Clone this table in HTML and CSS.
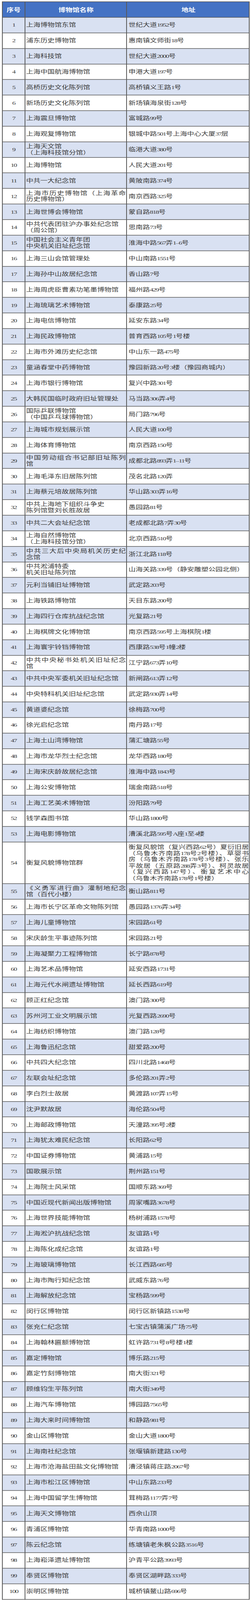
FILE: index.html
```html
<!DOCTYPE html>
<html lang="zh-CN">
<head>
<meta charset="utf-8">
<title>上海博物馆名录</title>
<link rel="stylesheet" href="styles.css">
</head>
<body>
<div class="sheet">
<div class="row head"><div class="cell no">序号</div><div class="cell name">博物馆名称</div><div class="cell addr">地址</div></div>
<div class="row"><div class="cell no">1</div><div class="cell name"><p>上海博物馆东馆</p></div><div class="cell addr"><p>世纪大道<span class="n">1952</span>号</p></div></div>
<div class="row"><div class="cell no">2</div><div class="cell name"><p>浦东历史博物馆</p></div><div class="cell addr"><p>惠南镇文师街<span class="n">18</span>号</p></div></div>
<div class="row"><div class="cell no">3</div><div class="cell name"><p>上海科技馆</p></div><div class="cell addr"><p>世纪大道<span class="n">2000</span>号</p></div></div>
<div class="row"><div class="cell no">4</div><div class="cell name"><p>上海中国航海博物馆</p></div><div class="cell addr"><p>申港大道<span class="n">197</span>号</p></div></div>
<div class="row"><div class="cell no">5</div><div class="cell name"><p>高桥历史文化陈列馆</p></div><div class="cell addr"><p>高桥镇义王路<span class="n">1</span>号</p></div></div>
<div class="row"><div class="cell no">6</div><div class="cell name"><p>新场历史文化陈列馆</p></div><div class="cell addr"><p>新场镇海泉街<span class="n">128</span>号</p></div></div>
<div class="row"><div class="cell no">7</div><div class="cell name"><p>上海震旦博物馆</p></div><div class="cell addr"><p>富城路<span class="n">99</span>号</p></div></div>
<div class="row"><div class="cell no">8</div><div class="cell name"><p>上海观复博物馆</p></div><div class="cell addr"><p>银城中路<span class="n">501</span>号上海中心大厦<span class="n">37</span>层</p></div></div>
<div class="row"><div class="cell no">9</div><div class="cell name"><p>上海天文馆<br>（上海科技馆分馆）</p></div><div class="cell addr"><p>临港大道<span class="n">380</span>号</p></div></div>
<div class="row"><div class="cell no">10</div><div class="cell name"><p>上海博物馆</p></div><div class="cell addr"><p>人民大道<span class="n">201</span>号</p></div></div>
<div class="row"><div class="cell no">11</div><div class="cell name"><p>中共一大纪念馆</p></div><div class="cell addr"><p>黄陂南路<span class="n">374</span>号</p></div></div>
<div class="row"><div class="cell no">12</div><div class="cell name"><p class="jl">上海市历史博物馆（上海革命</p><p>历史博物馆）</p></div><div class="cell addr"><p>南京西路<span class="n">325</span>号</p></div></div>
<div class="row"><div class="cell no">13</div><div class="cell name"><p>上海世博会博物馆</p></div><div class="cell addr"><p>蒙自路<span class="n">818</span>号</p></div></div>
<div class="row"><div class="cell no">14</div><div class="cell name"><p>中共代表团驻沪办事处纪念馆<br>（周公馆）</p></div><div class="cell addr"><p>思南路<span class="n">73</span>号</p></div></div>
<div class="row"><div class="cell no">15</div><div class="cell name"><p>中国社会主义青年团<br>中央机关旧址纪念馆</p></div><div class="cell addr"><p>淮海中路<span class="n">567</span>弄<span class="n">1–6</span>号</p></div></div>
<div class="row"><div class="cell no">16</div><div class="cell name"><p>上海三山会馆管理处</p></div><div class="cell addr"><p>中山南路<span class="n">1551</span>号</p></div></div>
<div class="row"><div class="cell no">17</div><div class="cell name"><p>上海孙中山故居纪念馆</p></div><div class="cell addr"><p>香山路<span class="n">7</span>号</p></div></div>
<div class="row"><div class="cell no">18</div><div class="cell name"><p>上海周虎臣曹素功笔墨博物馆</p></div><div class="cell addr"><p>福州路<span class="n">429</span>号</p></div></div>
<div class="row"><div class="cell no">19</div><div class="cell name"><p>上海琉璃艺术博物馆</p></div><div class="cell addr"><p>泰康路<span class="n">25</span>号</p></div></div>
<div class="row"><div class="cell no">20</div><div class="cell name"><p>上海电信博物馆</p></div><div class="cell addr"><p>延安东路<span class="n">34</span>号</p></div></div>
<div class="row"><div class="cell no">21</div><div class="cell name"><p>上海民政博物馆</p></div><div class="cell addr"><p>普育西路<span class="n">105</span>号<span class="n">1</span>号楼</p></div></div>
<div class="row"><div class="cell no">22</div><div class="cell name"><p>上海市外滩历史纪念馆</p></div><div class="cell addr"><p>中山东一路<span class="n">475</span>号</p></div></div>
<div class="row"><div class="cell no">23</div><div class="cell name"><p>童涵春堂中药博物馆</p></div><div class="cell addr"><p>豫园新路<span class="n">20</span>号<span class="n">3</span>楼（豫园商城内）</p></div></div>
<div class="row"><div class="cell no">24</div><div class="cell name"><p>上海市银行博物馆</p></div><div class="cell addr"><p>复兴中路<span class="n">301</span>号</p></div></div>
<div class="row"><div class="cell no">25</div><div class="cell name"><p>大韩民国临时政府旧址管理处</p></div><div class="cell addr"><p>马当路<span class="n">306</span>弄<span class="n">4</span>号</p></div></div>
<div class="row"><div class="cell no">26</div><div class="cell name"><p>国际乒联博物馆<br>（中国乒乓球博物馆）</p></div><div class="cell addr"><p>局门路<span class="n">796</span>号</p></div></div>
<div class="row"><div class="cell no">27</div><div class="cell name"><p>上海城市规划展示馆</p></div><div class="cell addr"><p>人民大道<span class="n">100</span>号</p></div></div>
<div class="row"><div class="cell no">28</div><div class="cell name"><p>上海体育博物馆</p></div><div class="cell addr"><p>南京西路<span class="n">150</span>号</p></div></div>
<div class="row"><div class="cell no">29</div><div class="cell name"><p class="jl">中国劳动组合书记部旧址陈列</p><p>馆</p></div><div class="cell addr"><p>成都北路<span class="n">893</span>弄<span class="n">1–11</span>号</p></div></div>
<div class="row"><div class="cell no">30</div><div class="cell name"><p>上海毛泽东旧居陈列馆</p></div><div class="cell addr"><p>茂名北路<span class="n">120</span>弄</p></div></div>
<div class="row"><div class="cell no">31</div><div class="cell name"><p>上海蔡元培故居陈列馆</p></div><div class="cell addr"><p>华山路<span class="n">303</span>弄<span class="n">16</span>号</p></div></div>
<div class="row"><div class="cell no">32</div><div class="cell name"><p>中共上海地下组织斗争史<br>陈列馆暨刘长胜故居</p></div><div class="cell addr"><p>愚园路<span class="n">81</span>号</p></div></div>
<div class="row"><div class="cell no">33</div><div class="cell name"><p>中共二大会址纪念馆</p></div><div class="cell addr"><p>老成都北路<span class="n">7</span>弄<span class="n">30</span>号</p></div></div>
<div class="row"><div class="cell no">34</div><div class="cell name"><p>上海自然博物馆<br>（上海科技馆分馆）</p></div><div class="cell addr"><p>北京西路<span class="n">510</span>号</p></div></div>
<div class="row"><div class="cell no">35</div><div class="cell name"><p class="jl">中共三大后中央局机关历史纪</p><p>念馆</p></div><div class="cell addr"><p>浙江北路<span class="n">118</span>号</p></div></div>
<div class="row"><div class="cell no">36</div><div class="cell name"><p>中共淞浦特委<br>机关旧址陈列馆</p></div><div class="cell addr"><p>山海关路<span class="n">339</span>号（静安雕塑公园北侧）</p></div></div>
<div class="row"><div class="cell no">37</div><div class="cell name"><p>元利当铺旧址博物馆</p></div><div class="cell addr"><p>武定路<span class="n">203</span>号</p></div></div>
<div class="row"><div class="cell no">38</div><div class="cell name"><p>上海铁路博物馆</p></div><div class="cell addr"><p>天目东路<span class="n">200</span>号</p></div></div>
<div class="row"><div class="cell no">39</div><div class="cell name"><p>上海四行仓库抗战纪念馆</p></div><div class="cell addr"><p>光复路<span class="n">21</span>号</p></div></div>
<div class="row"><div class="cell no">40</div><div class="cell name"><p>上海棋牌文化博物馆</p></div><div class="cell addr"><p>南京西路<span class="n">595</span>号上海棋院<span class="n">1</span>楼</p></div></div>
<div class="row"><div class="cell no">41</div><div class="cell name"><p>上海寰宇铃铛博物馆</p></div><div class="cell addr"><p>西康路<span class="n">538</span>号<span class="n">1</span>幢<span class="n">2</span>楼</p></div></div>
<div class="row"><div class="cell no">42</div><div class="cell name"><p class="jl">中共中央秘书处机关旧址纪念</p><p>馆</p></div><div class="cell addr"><p>江宁路<span class="n">673</span>弄<span class="n">10</span>号</p></div></div>
<div class="row"><div class="cell no">43</div><div class="cell name"><p>中共中央军委机关旧址纪念馆</p></div><div class="cell addr"><p>新闸路<span class="n">613</span>弄<span class="n">12</span>号</p></div></div>
<div class="row"><div class="cell no">44</div><div class="cell name"><p>中央特科机关旧址纪念馆</p></div><div class="cell addr"><p>武定路<span class="n">930</span>弄<span class="n">14</span>号</p></div></div>
<div class="row"><div class="cell no">45</div><div class="cell name"><p>黄道婆纪念馆</p></div><div class="cell addr"><p>徐梅路<span class="n">700</span>号</p></div></div>
<div class="row"><div class="cell no">46</div><div class="cell name"><p>徐光启纪念馆</p></div><div class="cell addr"><p>南丹路<span class="n">17</span>号</p></div></div>
<div class="row"><div class="cell no">47</div><div class="cell name"><p>上海土山湾博物馆</p></div><div class="cell addr"><p>蒲汇塘路<span class="n">55</span>号</p></div></div>
<div class="row"><div class="cell no">48</div><div class="cell name"><p>上海市龙华烈士纪念馆</p></div><div class="cell addr"><p>龙华西路<span class="n">180</span>号</p></div></div>
<div class="row"><div class="cell no">49</div><div class="cell name"><p>上海宋庆龄故居纪念馆</p></div><div class="cell addr"><p>淮海中路<span class="n">1843</span>号</p></div></div>
<div class="row"><div class="cell no">50</div><div class="cell name"><p>上海公安博物馆</p></div><div class="cell addr"><p>瑞金南路<span class="n">518</span>号</p></div></div>
<div class="row"><div class="cell no">51</div><div class="cell name"><p>上海工艺美术博物馆</p></div><div class="cell addr"><p>汾阳路<span class="n">79</span>号</p></div></div>
<div class="row"><div class="cell no">52</div><div class="cell name"><p>钱学森图书馆</p></div><div class="cell addr"><p>华山路<span class="n">1800</span>号</p></div></div>
<div class="row"><div class="cell no">53</div><div class="cell name"><p>上海电影博物馆</p></div><div class="cell addr"><p>漕溪北路<span class="n">595</span>号<span class="n">A</span>座<span class="n">1</span>至<span class="n">4</span>楼</p></div></div>
<div class="row tall"><div class="cell no">54</div><div class="cell name"><p>衡复风貌博物馆群</p></div><div class="cell addr long"><p class="jl">衡复风貌馆（复兴西路<span class="n">62</span>号）夏衍旧居</p><p class="jl">（乌鲁木齐南路<span class="n">178</span>号<span class="n">2</span>号楼）、草婴书</p><p class="jl">房（乌鲁木齐南路<span class="n">178</span>号<span class="n">3</span>号楼）、张乐</p><p class="jl">平故居（五原路<span class="n">288</span>弄<span class="n">3</span>号）、柯灵故居</p><p class="jl">（复兴西路<span class="n">147</span>号）、衡复艺术中心</p><p>（乌鲁木齐南路<span class="n">178</span>号<span class="n">1</span>号楼）</p></div></div>
<div class="row"><div class="cell no">55</div><div class="cell name"><p class="jl">《义勇军进行曲》灌制地纪念</p><p>馆（百代小楼）</p></div><div class="cell addr"><p>衡山路<span class="n">811</span>号</p></div></div>
<div class="row"><div class="cell no">56</div><div class="cell name"><p>上海市长宁区革命文物陈列馆</p></div><div class="cell addr"><p>愚园路<span class="n">1376</span>弄<span class="n">34</span>号</p></div></div>
<div class="row"><div class="cell no">57</div><div class="cell name"><p>上海儿童博物馆</p></div><div class="cell addr"><p>宋园路<span class="n">61</span>号</p></div></div>
<div class="row"><div class="cell no">58</div><div class="cell name"><p>宋庆龄生平事迹陈列馆</p></div><div class="cell addr"><p>宋园路<span class="n">21</span>号</p></div></div>
<div class="row"><div class="cell no">59</div><div class="cell name"><p>上海凝聚力工程博物馆</p></div><div class="cell addr"><p>长宁路<span class="n">878</span>号</p></div></div>
<div class="row"><div class="cell no">60</div><div class="cell name"><p>上海艺术品博物馆</p></div><div class="cell addr"><p>延安西路<span class="n">1731</span>号</p></div></div>
<div class="row"><div class="cell no">61</div><div class="cell name"><p>上海元代水闸遗址博物馆</p></div><div class="cell addr"><p>延长西路<span class="n">619</span>号</p></div></div>
<div class="row"><div class="cell no">62</div><div class="cell name"><p>顾正红纪念馆</p></div><div class="cell addr"><p>澳门路<span class="n">300</span>号</p></div></div>
<div class="row"><div class="cell no">63</div><div class="cell name"><p>苏州河工业文明展示馆</p></div><div class="cell addr"><p>光复西路<span class="n">2690</span>号</p></div></div>
<div class="row"><div class="cell no">64</div><div class="cell name"><p>上海纺织博物馆</p></div><div class="cell addr"><p>澳门路<span class="n">128</span>号</p></div></div>
<div class="row"><div class="cell no">65</div><div class="cell name"><p>上海鲁迅纪念馆</p></div><div class="cell addr"><p>甜爱路<span class="n">200</span>号</p></div></div>
<div class="row"><div class="cell no">66</div><div class="cell name"><p>中共四大纪念馆</p></div><div class="cell addr"><p>四川北路<span class="n">1468</span>号</p></div></div>
<div class="row"><div class="cell no">67</div><div class="cell name"><p>左联会址纪念馆</p></div><div class="cell addr"><p>多伦路<span class="n">201</span>弄<span class="n">2</span>号</p></div></div>
<div class="row"><div class="cell no">68</div><div class="cell name"><p>李白烈士故居</p></div><div class="cell addr"><p>黄渡路<span class="n">107</span>弄<span class="n">15</span>号</p></div></div>
<div class="row"><div class="cell no">69</div><div class="cell name"><p>沈尹默故居</p></div><div class="cell addr"><p>海伦路<span class="n">504</span>号</p></div></div>
<div class="row"><div class="cell no">70</div><div class="cell name"><p>上海邮政博物馆</p></div><div class="cell addr"><p>天潼路<span class="n">395</span>号<span class="n">2</span>楼</p></div></div>
<div class="row"><div class="cell no">71</div><div class="cell name"><p>上海犹太难民纪念馆</p></div><div class="cell addr"><p>长阳路<span class="n">62</span>号</p></div></div>
<div class="row"><div class="cell no">72</div><div class="cell name"><p>中国证券博物馆</p></div><div class="cell addr"><p>黄浦路<span class="n">15</span>号</p></div></div>
<div class="row"><div class="cell no">73</div><div class="cell name"><p>国歌展示馆</p></div><div class="cell addr"><p>荆州路<span class="n">151</span>号</p></div></div>
<div class="row"><div class="cell no">74</div><div class="cell name"><p>上海院士风采馆</p></div><div class="cell addr"><p>国顺东路<span class="n">369</span>号</p></div></div>
<div class="row"><div class="cell no">75</div><div class="cell name"><p>中国近现代新闻出版博物馆</p></div><div class="cell addr"><p>周家嘴路<span class="n">3678</span>号</p></div></div>
<div class="row"><div class="cell no">76</div><div class="cell name"><p>上海世界技能博物馆</p></div><div class="cell addr"><p>杨树浦路<span class="n">1578</span>号</p></div></div>
<div class="row"><div class="cell no">77</div><div class="cell name"><p>上海淞沪抗战纪念馆</p></div><div class="cell addr"><p>友谊路<span class="n">1</span>号</p></div></div>
<div class="row"><div class="cell no">78</div><div class="cell name"><p>上海陈化成纪念馆</p></div><div class="cell addr"><p>友谊路<span class="n">1</span>号</p></div></div>
<div class="row"><div class="cell no">79</div><div class="cell name"><p>上海玻璃博物馆</p></div><div class="cell addr"><p>长江西路<span class="n">685</span>号</p></div></div>
<div class="row"><div class="cell no">80</div><div class="cell name"><p>上海市陶行知纪念馆</p></div><div class="cell addr"><p>武威东路<span class="n">76</span>号</p></div></div>
<div class="row"><div class="cell no">81</div><div class="cell name"><p>上海解放纪念馆</p></div><div class="cell addr"><p>宝杨路<span class="n">599</span>号</p></div></div>
<div class="row"><div class="cell no">82</div><div class="cell name"><p>闵行区博物馆</p></div><div class="cell addr"><p>闵行区新镇路<span class="n">1538</span>号</p></div></div>
<div class="row"><div class="cell no">83</div><div class="cell name"><p>张充仁纪念馆</p></div><div class="cell addr"><p>七宝古镇蒲溪广场<span class="n">75</span>号</p></div></div>
<div class="row"><div class="cell no">84</div><div class="cell name"><p>上海翰林匾额博物馆</p></div><div class="cell addr"><p>虹许路<span class="n">731</span>号<span class="n">8</span>号楼<span class="n">1</span>楼</p></div></div>
<div class="row"><div class="cell no">85</div><div class="cell name"><p>嘉定博物馆</p></div><div class="cell addr"><p>博乐路<span class="n">215</span>号</p></div></div>
<div class="row"><div class="cell no">86</div><div class="cell name"><p>嘉定竹刻博物馆</p></div><div class="cell addr"><p>南大街<span class="n">321</span>号</p></div></div>
<div class="row"><div class="cell no">87</div><div class="cell name"><p>顾维钧生平陈列馆</p></div><div class="cell addr"><p>南大街<span class="n">349</span>号</p></div></div>
<div class="row"><div class="cell no">88</div><div class="cell name"><p>上海汽车博物馆</p></div><div class="cell addr"><p>博园路<span class="n">7565</span>号</p></div></div>
<div class="row"><div class="cell no">89</div><div class="cell name"><p>上海大来时间博物馆</p></div><div class="cell addr"><p>和静路<span class="n">981</span>号</p></div></div>
<div class="row"><div class="cell no">90</div><div class="cell name"><p>金山区博物馆</p></div><div class="cell addr"><p>金山大道<span class="n">1800</span>号</p></div></div>
<div class="row"><div class="cell no">91</div><div class="cell name"><p>上海南社纪念馆</p></div><div class="cell addr"><p>张堰镇新建路<span class="n">130</span>号</p></div></div>
<div class="row"><div class="cell no">92</div><div class="cell name"><p>上海市沧海盐田盐文化博物馆</p></div><div class="cell addr"><p>漕泾镇蒋庄路<span class="n">2067</span>号</p></div></div>
<div class="row"><div class="cell no">93</div><div class="cell name"><p>上海市松江区博物馆</p></div><div class="cell addr"><p>中山东路<span class="n">233</span>号</p></div></div>
<div class="row"><div class="cell no">94</div><div class="cell name"><p>上海中国留学生博物馆</p></div><div class="cell addr"><p>茸梅路<span class="n">1177</span>弄<span class="n">7</span>号</p></div></div>
<div class="row"><div class="cell no">95</div><div class="cell name"><p>上海天文博物馆</p></div><div class="cell addr"><p>西佘山顶</p></div></div>
<div class="row"><div class="cell no">96</div><div class="cell name"><p>青浦区博物馆</p></div><div class="cell addr"><p>华青南路<span class="n">1000</span>号</p></div></div>
<div class="row"><div class="cell no">97</div><div class="cell name"><p>陈云纪念馆</p></div><div class="cell addr"><p>练塘镇老朱枫公路<span class="n">3516</span>号</p></div></div>
<div class="row"><div class="cell no">98</div><div class="cell name"><p>上海崧泽遗址博物馆</p></div><div class="cell addr"><p>沪青平公路<span class="n">3993</span>号</p></div></div>
<div class="row"><div class="cell no">99</div><div class="cell name"><p>奉贤区博物馆</p></div><div class="cell addr"><p>奉贤区湖畔路<span class="n">333</span>号</p></div></div>
<div class="row"><div class="cell no">100</div><div class="cell name"><p>崇明区博物馆</p></div><div class="cell addr"><p>城桥镇鳌山路<span class="n">696</span>号</p></div></div>
</div>
<script src="script.js"></script>
</body>
</html>
```

FILE: styles.css
```css
html {
  margin: 0;
  padding: 0;
  overflow: hidden;
  background: #ffffff;
}

body {
  margin: 0;
  padding: 0;
  height: 100vh;
  overflow: hidden;
  background: #ffffff;
}

.sheet {
  box-sizing: border-box;
  width: 634px;
  margin: 5px 0 0 5px;
  padding: 2px;
  display: flex;
  flex-direction: column;
  gap: 2px;
  background: #585858;
  font-family: "Liberation Serif", "Noto Sans CJK SC", serif;
  font-size: 18.2px;
  line-height: 21px;
  color: #3a3a3a;
  transform: scale(var(--fx, 1), var(--fy, 1));
  transform-origin: -5px -5px;
}

.row {
  display: grid;
  grid-template-columns: 56px 258px 312px;
  column-gap: 2px;
  height: 51.85px;
  flex: none;
}

.row.head {
  height: 52px;
}

.row.tall {
  height: 142px;
}

.cell {
  display: flex;
  flex-direction: column;
  justify-content: center;
  min-width: 0;
  background: #ffffff;
  white-space: nowrap;
}

.row:nth-child(even) .cell {
  background: #d9e1f2;
}

.row.head .cell {
  background: #4472c4;
  color: #ffffff;
  font-family: "Noto Sans CJK SC", sans-serif;
  font-weight: 700;
  font-size: 18px;
  text-align: center;
  letter-spacing: 0;
}

.cell p {
  margin: 0;
}

.no {
  text-align: center;
  letter-spacing: -1.6px;
}

.name {
  padding-left: 2px;
  padding-right: 1px;
}

.addr {
  padding-left: 4px;
  padding-right: 1px;
}

.addr.long {
  padding-right: 0;
  line-height: 21.4px;
}

.n {
  letter-spacing: -1.6px;
}

.jl {
  text-align: justify;
  text-align-last: justify;
  white-space: normal;
}
```

FILE: script.js
```js
(function () {
  var root = document.documentElement;
  function fit() {
    root.style.setProperty('--fx', String(window.innerWidth / 640));
    root.style.setProperty('--fy', String(window.innerHeight / 5537));
  }
  fit();
  window.addEventListener('resize', fit);
})();
```
